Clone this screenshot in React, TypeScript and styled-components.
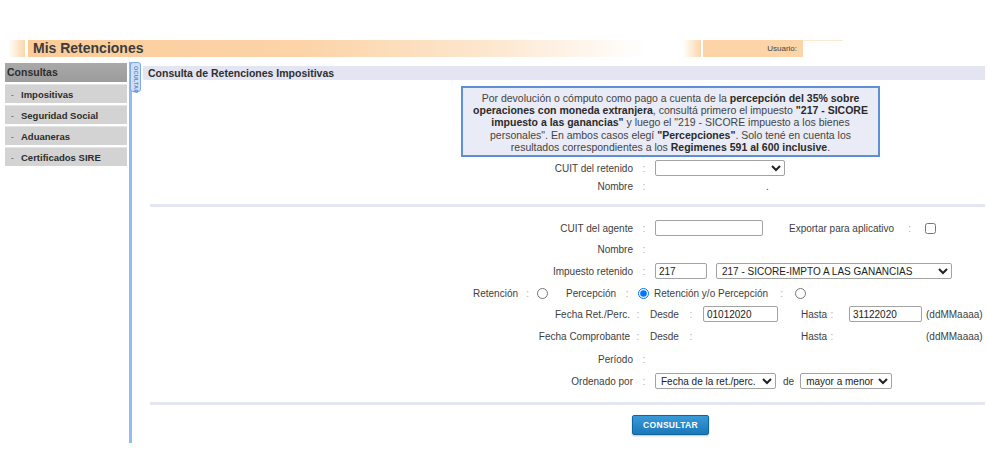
import React from "react";
import styled, { createGlobalStyle } from "styled-components";

const GlobalStyle = createGlobalStyle`
  body {
    margin: 0;
    background: #fff;
    font-family: "Liberation Sans", Arial, sans-serif;
    color: #3a3a3a;
  }
`;

const Page = styled.div`
  width: 987px;
  height: 453px;
  padding-top: 40px;
  box-sizing: border-box;
  overflow: hidden;
`;

// ---- header band
const Header = styled.div`
  display: flex;
  height: 17px;
  padding-left: 8px;
`;
const HeaderFade = styled.div<{ $w: number; $ml: number }>`
  width: ${(p) => p.$w}px;
  margin-left: ${(p) => p.$ml}px;
  background: linear-gradient(to right, #ffffff, #fcd6ab);
`;
const TitleBlock = styled.div`
  margin-left: 3px;
  width: 612px;
  padding-left: 5px;
  background: linear-gradient(
    to right,
    #fbcc9a 0%,
    #fcd4a8 45%,
    #fde7cf 75%,
    #ffffff 100%
  );
  font-size: 14px;
  font-weight: bold;
  line-height: 17px;
  color: #3c3c3c;
`;
const UserBox = styled.div`
  margin-left: 2px;
  width: 100px;
  padding-right: 6px;
  box-sizing: border-box;
  background: #fcd4a8;
  font-size: 8px;
  line-height: 17px;
  text-align: right;
  color: #444;
`;
const UserValue = styled.div`
  width: 40px;
  border-top: 1px solid #fde9d3;
`;

// ---- body
const Body = styled.div`
  display: flex;
  margin-top: 5px;
`;
const Sidebar = styled.nav`
  width: 122px;
  margin-left: 5px;
  padding-top: 1px;
  display: flex;
  flex-direction: column;
  gap: 2px;
`;
const SideHead = styled.div`
  height: 19px;
  padding-left: 2px;
  background: linear-gradient(#a9a9a9, #9c9c9c);
  font-size: 10.5px;
  font-weight: bold;
  line-height: 19px;
  color: #2e2e2e;
`;
const SideItem = styled.div`
  height: 18px;
  display: flex;
  align-items: center;
  background: #d3d3d3;
  border-top: 1px solid #e4e4e4;
  font-size: 9.5px;
  font-weight: bold;
  color: #2c2c2c;
  &::before {
    content: "-";
    width: 16px;
    padding-left: 6px;
    box-sizing: border-box;
    font-size: 8px;
    color: #777;
  }
`;
const Divider = styled.div`
  position: relative;
  margin-left: 2px;
  width: 3px;
  height: 381px;
  background: #94bbef;
`;
const HideTab = styled.div`
  position: absolute;
  left: 1px;
  top: 0;
  width: 11px;
  height: 30px;
  box-sizing: border-box;
  border: 1px solid #7fa8e4;
  border-radius: 3px;
  background: #cfe0f8;
  display: flex;
  flex-direction: column;
  align-items: center;
  &::before {
    content: "";
    width: 5px;
    height: 5px;
    margin-top: 2px;
    border-radius: 50%;
    background: #8b5fe0;
  }
`;
const TabText = styled.span`
  writing-mode: vertical-rl;
  font-size: 5.5px;
  font-weight: bold;
  color: #5d86c8;
  margin-top: 1px;
  letter-spacing: 0.2px;
`;

const Main = styled.main`
  margin-left: 11px;
  width: 842px;
  display: flex;
  flex-direction: column;
`;
const SectionTitle = styled.div`
  margin-top: 4px;
  height: 14px;
  padding-left: 5px;
  background: #e3e5f2;
  font-size: 10.5px;
  font-weight: bold;
  line-height: 14px;
  color: #2f2f2f;
`;
const InfoBox = styled.div`
  margin: 6px 0 0 318px;
  width: 419px;
  height: 71px;
  box-sizing: border-box;
  padding-top: 4px;
  border: 2px solid #5d8ed6;
  background: #e9ebf6;
  font-size: 10.5px;
  line-height: 12.2px;
  text-align: center;
  white-space: nowrap;
  color: #444;
  b {
    color: #2a2a2a;
  }
`;
const Separator = styled.div<{ $mt: number }>`
  margin: ${(p) => p.$mt}px 0 0 7px;
  height: 3px;
  background: #e4e6f3;
`;

const Row = styled.div<{ $h: number; $mt?: number }>`
  display: grid;
  grid-template-columns: 490px 22px 1fr;
  align-items: center;
  height: ${(p) => p.$h}px;
  margin-top: ${(p) => p.$mt ?? 0}px;
  font-size: 10px;
`;
const DateRow = styled(Row)`
  grid-template-columns: 487px 16px 38px 14px 103px 25px 12px 84px 1fr;
`;
const Label = styled.span`
  text-align: right;
  color: #3e3e3e;
`;
const Colon = styled.span`
  text-align: center;
  color: #b8a8b0;
`;
const Text = styled.span<{ $pl?: number }>`
  padding-left: ${(p) => p.$pl ?? 0}px;
  color: #3e3e3e;
`;
const Value = styled.div<{ $pl?: number }>`
  display: flex;
  align-items: center;
  padding-left: ${(p) => p.$pl ?? 0}px;
`;
const Field = styled.input<{ $w: number }>`
  width: ${(p) => p.$w}px;
  height: 16px;
  box-sizing: border-box;
  padding: 0 3px;
  border: 1px solid #a3a3a3;
  border-radius: 2px;
  font-family: "Liberation Sans", Arial, sans-serif;
  font-size: 10px;
  color: #222;
  outline: none;
`;
const Select = styled.select<{ $w: number; $ml?: number }>`
  width: ${(p) => p.$w}px;
  height: 16px;
  margin-left: ${(p) => p.$ml ?? 0}px;
  padding: 0 1px;
  border: 1px solid #a3a3a3;
  border-radius: 2px;
  background: #fff;
  font-family: "Liberation Sans", Arial, sans-serif;
  font-size: 10px;
  color: #222;
`;
const Check = styled.input`
  width: 11px;
  height: 11px;
  margin: 0;
`;
const Pair = styled.span<{ $ml: number }>`
  margin-left: ${(p) => p.$ml}px;
  display: flex;
  align-items: center;
  color: #3e3e3e;
`;
const SmallColon = styled.span<{ $w: number }>`
  width: ${(p) => p.$w}px;
  text-align: center;
  color: #b8a8b0;
`;

const RadioRow = styled.div`
  display: flex;
  align-items: center;
  height: 22px;
  padding-left: 330px;
  font-size: 10px;
`;
const Radio = styled.input`
  width: 11px;
  height: 11px;
  margin: 0;
`;

const ButtonRow = styled.div`
  display: flex;
  margin-top: 10px;
  padding-left: 489px;
`;
const Button = styled.button`
  width: 77px;
  height: 20px;
  border: 1px solid #11659f;
  border-radius: 2px;
  background: linear-gradient(#3a9ad8, #1a78bb);
  color: #fff;
  font-family: "Liberation Sans", Arial, sans-serif;
  font-size: 8.5px;
  font-weight: bold;
  letter-spacing: 0.3px;
  box-shadow: 0 1px 2px rgba(0, 0, 0, 0.25);
`;

const menu = ["Impositivas", "Seguridad Social", "Aduaneras", "Certificados SIRE"];

export default function App() {
  return (
    <Page>
      <GlobalStyle />
      <Header>
        <HeaderFade $w={17} $ml={0} />
        <TitleBlock>Mis Retenciones</TitleBlock>
        <HeaderFade $w={18} $ml={38} />
        <UserBox>Usuario:</UserBox>
        <UserValue />
      </Header>
      <Body>
        <Sidebar>
          <SideHead>Consultas</SideHead>
          {menu.map((m) => (
            <SideItem key={m}>{m}</SideItem>
          ))}
        </Sidebar>
        <Divider>
          <HideTab>
            <TabText>OCULTAR</TabText>
          </HideTab>
        </Divider>
        <Main>
          <SectionTitle>Consulta de Retenciones Impositivas</SectionTitle>
          <InfoBox>
            Por devolución o cómputo como pago a cuenta de la{" "}
            <b>percepción del 35% sobre</b>
            <br />
            <b>operaciones con moneda extranjera</b>, consultá primero el impuesto{" "}
            <b>"217 - SICORE</b>
            <br />
            <b>impuesto a las ganancias"</b> y luego el "219 - SICORE impuesto a los bienes
            <br />
            personales". En ambos casos elegí <b>"Percepciones"</b>. Solo tené en cuenta los
            <br />
            resultados correspondientes a los <b>Regimenes 591 al 600 inclusive</b>.
          </InfoBox>

          <Row $h={18} $mt={2}>
            <Label>CUIT del retenido</Label>
            <Colon>:</Colon>
            <Value>
              <Select $w={130}>
                <option></option>
              </Select>
            </Value>
          </Row>
          <Row $h={18}>
            <Label>Nombre</Label>
            <Colon>:</Colon>
            <Text $pl={111}>.</Text>
          </Row>

          <Separator $mt={9} />

          <Row $h={22} $mt={10}>
            <Label>CUIT del agente</Label>
            <Colon>:</Colon>
            <Value>
              <Field $w={108} defaultValue="" />
              <Pair $ml={26}>
                Exportar para aplicativo
                <SmallColon $w={31}>:</SmallColon>
                <Check type="checkbox" />
              </Pair>
            </Value>
          </Row>
          <Row $h={21}>
            <Label>Nombre</Label>
            <Colon>:</Colon>
            <span />
          </Row>
          <Row $h={22}>
            <Label>Impuesto retenido</Label>
            <Colon>:</Colon>
            <Value>
              <Field $w={52} defaultValue="217" />
              <Select $w={236} $ml={9} defaultValue="217">
                <option value="217">217 - SICORE-IMPTO A LAS GANANCIAS</option>
              </Select>
            </Value>
          </Row>
          <RadioRow>
            <Text>Retención</Text>
            <SmallColon $w={19}>:</SmallColon>
            <Radio type="radio" name="tipo" />
            <Pair $ml={18}>
              Percepción
              <SmallColon $w={22}>:</SmallColon>
              <Radio type="radio" name="tipo" defaultChecked />
            </Pair>
            <Pair $ml={5}>
              Retención y/o Percepción
              <SmallColon $w={27}>:</SmallColon>
              <Radio type="radio" name="tipo" />
            </Pair>
          </RadioRow>
          <DateRow $h={20}>
            <Label>Fecha Ret./Perc.</Label>
            <Colon>:</Colon>
            <Text $pl={4}>Desde</Text>
            <Colon>:</Colon>
            <Value $pl={5}>
              <Field $w={75} defaultValue="01012020" />
            </Value>
            <Text>Hasta</Text>
            <Colon>:</Colon>
            <Value $pl={11}>
              <Field $w={73} defaultValue="31122020" />
            </Value>
            <Text $pl={4}>(ddMMaaaa)</Text>
          </DateRow>
          <DateRow $h={25}>
            <Label>Fecha Comprobante</Label>
            <Colon>:</Colon>
            <Text $pl={4}>Desde</Text>
            <Colon>:</Colon>
            <span />
            <Text>Hasta</Text>
            <Colon>:</Colon>
            <span />
            <Text $pl={4}>(ddMMaaaa)</Text>
          </DateRow>
          <Row $h={21}>
            <Label>Período</Label>
            <Colon>:</Colon>
            <span />
          </Row>
          <Row $h={22}>
            <Label>Ordenado por</Label>
            <Colon>:</Colon>
            <Value>
              <Select $w={121}>
                <option>Fecha de la ret./perc.</option>
              </Select>
              <Pair $ml={7}>de</Pair>
              <Select $w={92} $ml={6}>
                <option>mayor a menor</option>
              </Select>
            </Value>
          </Row>

          <Separator $mt={10} />

          <ButtonRow>
            <Button type="button">CONSULTAR</Button>
          </ButtonRow>
        </Main>
      </Body>
    </Page>
  );
}
